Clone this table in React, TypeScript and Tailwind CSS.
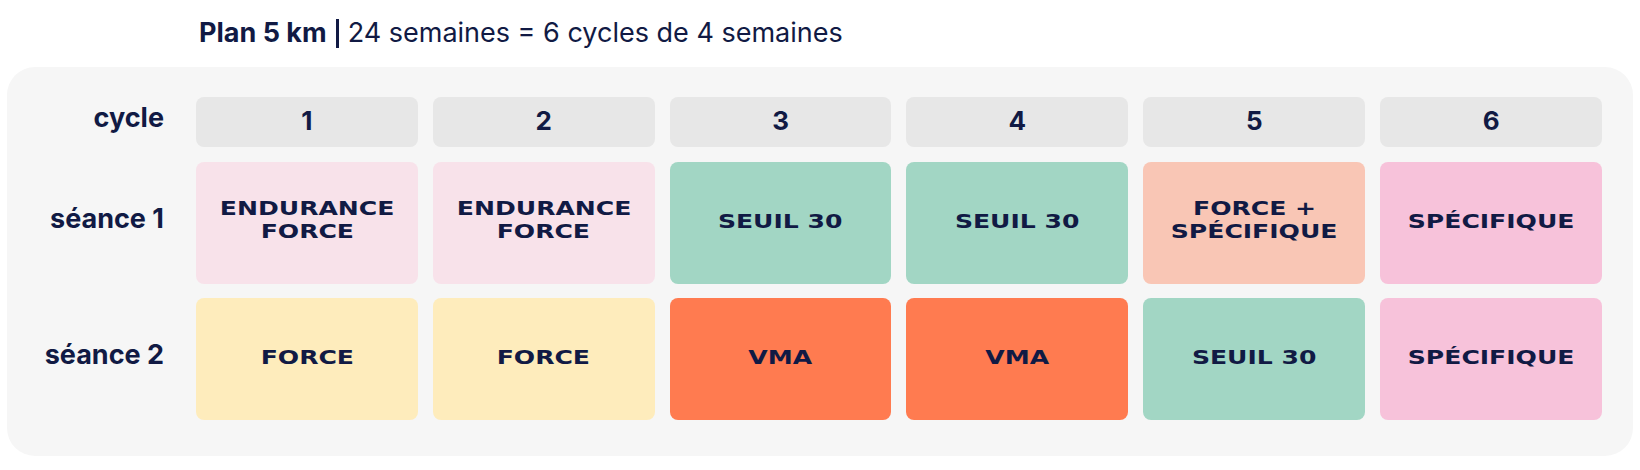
import React from "react";

type Cell = { lines: string[]; bg: string };

const row1: Cell[] = [
  { lines: ["ENDURANCE", "FORCE"], bg: "bg-[#f8e2ea]" },
  { lines: ["ENDURANCE", "FORCE"], bg: "bg-[#f8e2ea]" },
  { lines: ["SEUIL 30"], bg: "bg-[#a2d6c4]" },
  { lines: ["SEUIL 30"], bg: "bg-[#a2d6c4]" },
  { lines: ["FORCE +", "SPÉCIFIQUE"], bg: "bg-[#f9c6b5]" },
  { lines: ["SPÉCIFIQUE"], bg: "bg-[#f7c2da]" },
];

const row2: Cell[] = [
  { lines: ["FORCE"], bg: "bg-[#feecbc]" },
  { lines: ["FORCE"], bg: "bg-[#feecbc]" },
  { lines: ["VMA"], bg: "bg-[#ff7b50]" },
  { lines: ["VMA"], bg: "bg-[#ff7b50]" },
  { lines: ["SEUIL 30"], bg: "bg-[#a2d6c4]" },
  { lines: ["SPÉCIFIQUE"], bg: "bg-[#f7c2da]" },
];

function Label({ children, header }: { children: React.ReactNode; header?: boolean }) {
  return (
    <div
      className={`flex items-center justify-end pr-[17px] text-[27px] font-bold text-[#111a44] [font-family:Inter,sans-serif] ${
        header ? "mb-[1px]" : ""
      }`}
    >
      <span className="-translate-y-[4px]">{children}</span>
    </div>
  );
}

function Session({ cell }: { cell: Cell }) {
  const multi = cell.lines.length > 1;
  return (
    <div className={`flex h-[122px] items-center justify-center rounded-[8px] ${cell.bg}`}>
      <div
        className={`flex flex-col items-center text-[19px] font-bold leading-[23px] text-[#111a44] [font-family:'DejaVu_Sans',sans-serif] ${
          multi ? "-translate-y-[3px]" : "-translate-y-[2px]"
        }`}
      >
        {cell.lines.map((l, i) => (
          <span key={i} className="inline-block scale-x-[1.32] whitespace-nowrap">
            {l}
          </span>
        ))}
      </div>
    </div>
  );
}

export default function App() {
  return (
    <div className="h-[470px] w-[1640px] bg-white [font-family:Inter,sans-serif]">
      <div className="flex h-[67px] items-start pl-[199px] pt-[15px]">
        <div className="flex items-center text-[27px] leading-[36px] text-[#111a44]">
          <span className="font-bold">Plan 5 km</span>
          <span className="mx-[9px] inline-block h-[29px] w-[3px] bg-[#111a44]" />
          <span className="font-normal">24 semaines = 6 cycles de 4 semaines</span>
        </div>
      </div>
      <div className="ml-[7px] w-[1626px] rounded-[28px] bg-[#f6f6f6] pb-[36px] pr-[31px] pt-[30px]">
        <div className="grid grid-cols-[174px_repeat(6,1fr)] gap-x-[15px] gap-y-[14px]">
          <Label header>cycle</Label>
          {[1, 2, 3, 4, 5, 6].map((n) => (
            <div
              key={n}
              className="mb-[1px] flex h-[50px] items-center justify-center rounded-[8px] bg-[#e7e7e7] text-[26px] font-bold text-[#111a44]"
            >
              <span className="-translate-y-[2px]">{n}</span>
            </div>
          ))}
          <Label>séance 1</Label>
          {row1.map((c, i) => (
            <Session key={i} cell={c} />
          ))}
          <Label>séance 2</Label>
          {row2.map((c, i) => (
            <Session key={i} cell={c} />
          ))}
        </div>
      </div>
    </div>
  );
}
